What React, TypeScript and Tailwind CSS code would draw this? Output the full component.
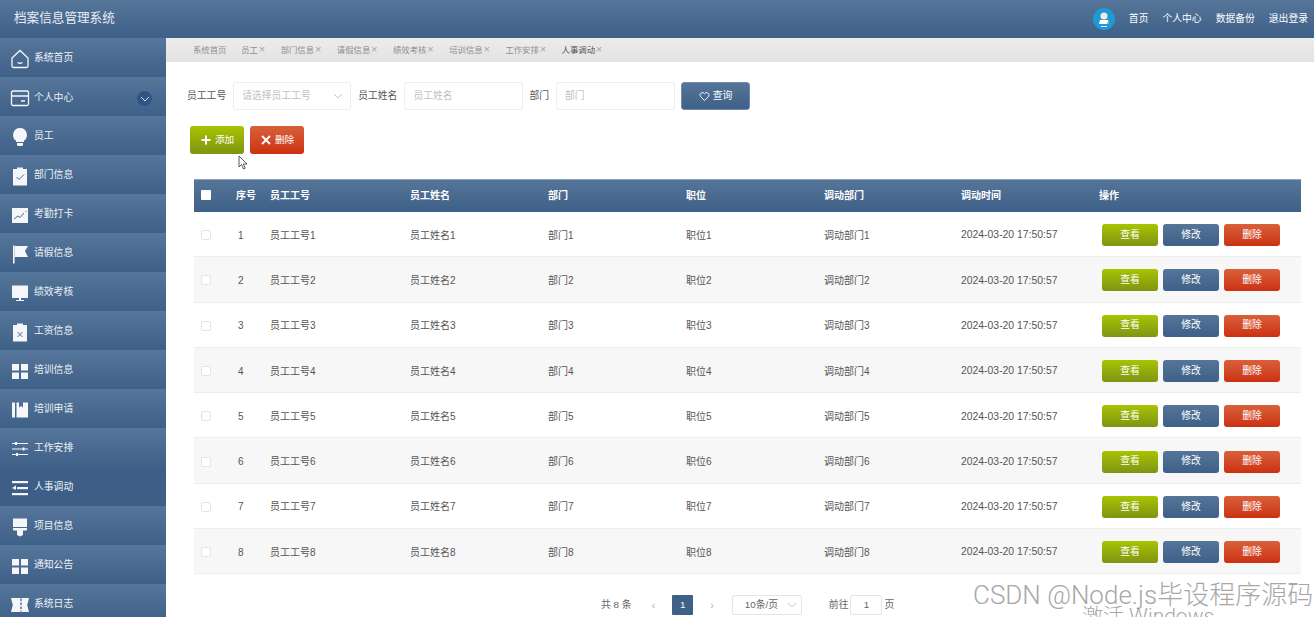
import React from "react";

const font = { fontFamily: '"Liberation Sans", "Noto Sans CJK SC", sans-serif' };

const W = "#f4f6f9";
const icons: Record<string, React.ReactNode> = {
  home: (
    <svg width="20" height="20" viewBox="0 0 20 20" fill="none" stroke={W} strokeWidth="1.3">
      <path d="M2 9 10 1.500 18 9v8a1.500 1.500 0 0 1-1.500 1.500h-13A1.500 1.500 0 0 1 2 17z" />
      <path d="M7.500 13.500q2.500 1.500 5 0" />
    </svg>
  ),
  card: (
    <svg width="20" height="20" viewBox="0 0 20 20" fill="none" stroke={W} strokeWidth="1.3">
      <rect x="1.500" y="3" width="17" height="14.500" rx="1.500" />
      <path d="M1.500 8h17M11 13h4" />
    </svg>
  ),
  bulb: (
    <svg width="20" height="20" viewBox="0 0 20 20" fill={W}>
      <path d="M10 1a7 7 0 0 1 4 12.700V15H6v-1.300A7 7 0 0 1 10 1z" />
      <path d="M7 16h6v1.500a1.500 1.500 0 0 1-1.500 1.500h-3A1.500 1.500 0 0 1 7 17.500z" />
    </svg>
  ),
  check: (
    <svg width="20" height="20" viewBox="0 0 20 20">
      <path fill={W} d="M3 3h4V1.500h6V3h4v16.500H3z" />
      <path fill="none" stroke="#4b6c92" strokeWidth="1" d="m6.500 11 2.500 2.500 5-5" />
    </svg>
  ),
  chart: (
    <svg width="20" height="20" viewBox="0 0 20 20">
      <rect fill={W} x="2" y="3" width="16" height="15" />
      <path fill="none" stroke="#4b6c92" strokeWidth="1" d="m4 14 4-3 2 1.500 4-4.500M15.500 6.500h1" />
    </svg>
  ),
  flag: (
    <svg width="20" height="20" viewBox="0 0 20 20" fill={W}>
      <rect x="3" y="1.500" width="1.600" height="18" />
      <path d="M4.600 2H18l-3 5 3 6H4.600z" />
    </svg>
  ),
  monitor: (
    <svg width="20" height="20" viewBox="0 0 20 20" fill={W}>
      <rect x="2" y="2.500" width="16" height="12.500" />
      <path d="M9 15h2v2h3v1H6v-1h3z" />
    </svg>
  ),
  clipx: (
    <svg width="20" height="20" viewBox="0 0 20 20">
      <path fill={W} d="M3 3h4V1.500h6V3h4v16.500H3z" />
      <path fill="none" stroke="#4b6c92" strokeWidth="1" d="m7.500 10 5 5m0-5-5 5" />
    </svg>
  ),
  grid: (
    <svg width="20" height="20" viewBox="0 0 20 20" fill={W}>
      <rect x="2" y="3" width="7" height="6.500" />
      <rect x="11" y="3" width="7" height="6.500" />
      <rect x="2" y="11.500" width="7" height="6.500" />
      <rect x="11" y="11.500" width="7" height="6.500" />
    </svg>
  ),
  book: (
    <svg width="20" height="20" viewBox="0 0 20 20" fill={W}>
      <rect x="2" y="2.500" width="3" height="15" />
      <path d="M6.500 2.500H9v5l2-1.500 2 1.500v-5h5v15H6.500z" />
    </svg>
  ),
  sliders: (
    <svg width="20" height="20" viewBox="0 0 20 20" fill={W} stroke={W}>
      <path strokeWidth="1" fill="none" d="M2 4.500h16M2 10h16M2 15.500h16" />
      <rect x="5" y="3" width="2" height="3" stroke="none" />
      <rect x="12.500" y="8.500" width="2" height="3" stroke="none" />
      <rect x="6" y="14" width="2" height="3" stroke="none" />
    </svg>
  ),
  lines: (
    <svg width="20" height="20" viewBox="0 0 20 20" fill={W}>
      <rect x="2" y="3" width="16" height="2.200" />
      <rect x="7" y="9" width="11" height="2.200" />
      <rect x="2" y="15" width="16" height="2.200" />
      <path d="M6 7.500v4.500L2 10z" />
    </svg>
  ),
  brush: (
    <svg width="20" height="20" viewBox="0 0 20 20" fill={W}>
      <path d="M3 1.500h14V10H3zM3 11h14v1.500a1 1 0 0 1-1 1h-3V18l-3 1.500L7 18v-4.500H4a1 1 0 0 1-1-1z" />
    </svg>
  ),
  ticket: (
    <svg width="20" height="20" viewBox="0 0 20 20">
      <path fill={W} d="M1 3h18l-1.800 7 1.800 7H1l1.800-7z" />
      <path stroke="#4b6c92" strokeWidth="1.400" strokeDasharray="2.500 1.500" d="M11 3.500v13" />
    </svg>
  ),
};

const menu: [string, string][] = [
  ["系统首页", "home"],
  ["个人中心", "card"],
  ["员工", "bulb"],
  ["部门信息", "check"],
  ["考勤打卡", "chart"],
  ["请假信息", "flag"],
  ["绩效考核", "monitor"],
  ["工资信息", "clipx"],
  ["培训信息", "grid"],
  ["培训申请", "book"],
  ["工作安排", "sliders"],
  ["人事调动", "lines"],
  ["项目信息", "brush"],
  ["通知公告", "grid"],
  ["系统日志", "ticket"],
];

const tabs = ["系统首页", "员工", "部门信息", "请假信息", "绩效考核", "培训信息", "工作安排", "人事调动"];

const blue = "bg-gradient-to-b from-[#557599] to-[#3f6087]";
const green = "bg-gradient-to-b from-[#a8c400] to-[#7f9412]";
const red = "bg-gradient-to-b from-[#d9603a] to-[#cb2f10]";

function Chevron({ className = "" }: { className?: string }) {
  return (
    <svg width="10" height="10" viewBox="0 0 10 10" fill="none" stroke="currentColor" strokeWidth="0.8" className={className}>
      <path d="m1 3 4 4 4-4" />
    </svg>
  );
}

function Field({ label, placeholder, w, select }: { label: string; placeholder: string; w: string; select?: boolean }) {
  return (
    <div className="flex items-center">
      <span className="text-[9.800px] text-[#555]">{label}</span>
      <div className={`${w} ml-[7px] h-[28px] border border-[#eceef1] rounded-[3px] bg-white flex items-center justify-between pl-[8px] pr-[7px] text-[9.800px] text-[#bdbfc4]`}>
        <span>{placeholder}</span>
        {select && <Chevron className="text-[#b5b8bd]" />}
      </div>
    </div>
  );
}

export default function App() {
  return (
    <div style={font} className="w-[1314px] h-[617px] overflow-hidden bg-white relative flex flex-col">
      <header className={`h-[38px] shrink-0 ${blue} flex items-center pl-[14px] pr-[6px]`}>
        <span className="text-[12.600px] text-[#e8edf3] mb-[2px]">档案信息管理系统</span>
        <div className="ml-auto flex items-center text-[9.800px] text-white">
          <div className="w-[22px] h-[22px] rounded-full bg-[#1c9ad6] mr-[14px] flex items-center justify-center">
            <svg width="14" height="18" viewBox="0 0 14 18">
              <circle cx="7" cy="6" r="3.500" fill="#f5e9e2" />
              <path d="M3 10h8l1 4H2z" fill="#fff" />
              <rect x="4" y="16" width="6" height="1" fill="#fff" />
              <circle cx="11" cy="13" r="0.800" fill="#d32f2f" />
            </svg>
          </div>
          <span className="mr-[14px]">首页</span>
          <span className="mr-[14px]">个人中心</span>
          <span className="mr-[14px]">数据备份</span>
          <span>退出登录</span>
        </div>
      </header>
      <div className="flex flex-1 min-h-0">
        <aside className="w-[166px] shrink-0 overflow-hidden">
          {menu.map(([name, icon]) => (
            <div
              key={name}
              className={`h-[39px] flex items-center pl-[10px] pt-[2px] text-[9.800px] text-[#eef2f6] ${
                name === "人事调动" ? "bg-[#3c5e87]" : "bg-gradient-to-b from-[#56769b] to-[#3f6087]"
              }`}
            >
              <span className="w-[20px] h-[20px] mr-[4px] shrink-0">{icons[icon]}</span>
              <span className={name === "个人中心" ? "mt-[2px]" : ""}>{name}</span>
              {name === "个人中心" && (
                <span className="ml-auto mr-[14px] mt-[2px] w-[15px] h-[15px] rounded-full bg-[#2f5587] flex items-center justify-center text-white">
                  <Chevron />
                </span>
              )}
            </div>
          ))}
        </aside>
        <main className="flex-1 min-w-0 flex flex-col">
          <nav className="h-[24px] shrink-0 bg-gradient-to-b from-[#ececec] to-[#e3e3e3] flex items-center pl-[27px] gap-[14.700px] text-[8.400px] text-[#8b8f94]">
            {tabs.map((t, i) => (
              <span key={t} className={`flex items-center ${i === 7 ? "text-[#4f5358]" : ""}`}>
                {t}
                {i > 0 && <span className="w-[8px] text-center text-[#a3a6aa] text-[11px] leading-none">×</span>}
              </span>
            ))}
          </nav>
          <div className="flex items-center pl-[21px] pt-[20px]">
            <Field label="员工工号" placeholder="请选择员工工号" w="w-[118px]" select />
            <div className="ml-[7px]">
              <Field label="员工姓名" placeholder="员工姓名" w="w-[119px]" />
            </div>
            <div className="ml-[6px]">
              <Field label="部门" placeholder="部门" w="w-[119px]" />
            </div>
            <button className={`ml-[6px] w-[69px] h-[28px] rounded-[3px] ${blue} border border-[#6f8cad] text-white text-[9.800px] flex items-center justify-center gap-[3px]`}>
              <svg width="11" height="11" viewBox="0 0 12 12" fill="none" stroke="currentColor" strokeWidth="1">
                <path d="M6 10.500 1.500 5.800A2.600 2.600 0 0 1 6 3a2.600 2.600 0 0 1 4.500 2.800z" />
              </svg>
              查询
            </button>
          </div>
          <div className="flex pl-[24px] pt-[16px] gap-[6px]">
            <button className={`w-[54px] h-[28px] rounded-[3px] ${green} text-white text-[9.600px] pl-[1px] flex items-center justify-center gap-[4px]`}>
              <svg width="10" height="10" viewBox="0 0 10 10" fill="none" stroke="#fff" strokeWidth="2">
                <path d="M5 0.500v9M0.500 5h9" />
              </svg>
              添加
            </button>
            <button className={`w-[54px] h-[28px] rounded-[3px] ${red} text-white text-[9.600px] pl-[1px] flex items-center justify-center gap-[4px]`}>
              <svg width="10" height="10" viewBox="0 0 10 10" fill="none" stroke="#fff" strokeWidth="1.800">
                <path d="m1 1 8 8m0-8-8 8" />
              </svg>
              删除
            </button>
          </div>
          <div className="ml-[28px] mr-[13px] mt-[25px] text-[10px] text-[#555]">
            <div className={`h-[33px] pb-[2px] flex items-center ${blue} text-white font-bold border-t border-[#8ea3bb]`}>
              <span className="w-[42px] pl-[7px] shrink-0 flex">
                <span className="w-[10px] h-[10px] rounded-[1px] bg-white" />
              </span>
              <span className="w-[34px] shrink-0">序号</span>
              {["员工工号", "员工姓名", "部门", "职位", "调动部门", "调动时间"].map((h, i) => (
                <span key={h} className={`${["w-[140px]", "w-[138px]", "w-[138px]", "w-[138px]", "w-[137px]", "w-[138px]"][i]} shrink-0`}>
                  {h}
                </span>
              ))}
              <span>操作</span>
            </div>
            {[1, 2, 3, 4, 5, 6, 7, 8].map((n) => (
              <div
                key={n}
                className={`h-[45.300px] pt-[2px] flex items-center border-b border-[#ededed] ${n % 2 === 0 ? "bg-[#f7f7f8]" : "bg-white"}`}
              >
                <span className="w-[42px] pl-[7px] shrink-0 flex">
                  <span className="w-[10px] h-[10px] rounded-[2px] border border-[#e2e4e8] bg-white" />
                </span>
                <span className="w-[34px] shrink-0 pl-[2px]">{n}</span>
                <span className="w-[140px] shrink-0">员工工号{n}</span>
                <span className="w-[138px] shrink-0">员工姓名{n}</span>
                <span className="w-[138px] shrink-0">部门{n}</span>
                <span className="w-[138px] shrink-0">职位{n}</span>
                <span className="w-[137px] shrink-0">调动部门{n}</span>
                <span className="w-[141px] shrink-0 text-[10.400px]">2024-03-20 17:50:57</span>
                <div className="flex gap-[5px] text-white text-[9.800px]">
                  <span className={`w-[56px] h-[22px] rounded-[3px] ${green} flex items-center justify-center`}>查看</span>
                  <span className={`w-[56px] h-[22px] rounded-[3px] ${blue} flex items-center justify-center`}>修改</span>
                  <span className={`w-[56px] h-[22px] rounded-[3px] ${red} flex items-center justify-center`}>删除</span>
                </div>
              </div>
            ))}
          </div>
          <div className="flex items-center pl-[435px] mt-[21px] text-[9.800px] text-[#666]">
            <span>共 8 条</span>
            <span className="ml-[20px] text-[#b0b3b8] text-[11px]">‹</span>
            <span className="ml-[17px] w-[21px] h-[20px] rounded-[1px] bg-[#3f6087] text-white flex items-center justify-center">1</span>
            <span className="ml-[17px] text-[#b0b3b8] text-[11px]">›</span>
            <div className="ml-[18px] w-[70px] h-[20px] border border-[#e3e5e8] rounded-[2px] flex items-center justify-between pl-[12px] pr-[4px]">
              <span>10条/页</span>
              <Chevron className="text-[#b5b8bd]" />
            </div>
            <span className="ml-[27px]">前往</span>
            <span className="ml-[2px] w-[32px] h-[20px] border border-[#e3e5e8] rounded-[2px] flex items-center justify-center">1</span>
            <span className="ml-[2px]">页</span>
          </div>
        </main>
      </div>
      <svg className="absolute left-[238px] top-[155px]" width="10" height="15" viewBox="0 0 10 15" fill="#fff" stroke="#333" strokeWidth="0.800">
        <path d="M1 1v11l2.500-2.500 2 4.500 1.800-.8-2-4.200H9z" />
      </svg>
      <span className="absolute left-[973px] top-[579px] font-['Roboto','Noto_Sans_CJK_SC',sans-serif] font-light text-[26px] leading-[32px] text-[#6d6d6d] opacity-60 whitespace-nowrap">CSDN @Node.js毕设程序源码</span>
      <span className="absolute left-[1082px] top-[604px] font-['Roboto','Noto_Sans_CJK_SC',sans-serif] font-light text-[21px] leading-[24px] text-[#6d6d6d] opacity-60 whitespace-nowrap">激活 Windows</span>
    </div>
  );
}
